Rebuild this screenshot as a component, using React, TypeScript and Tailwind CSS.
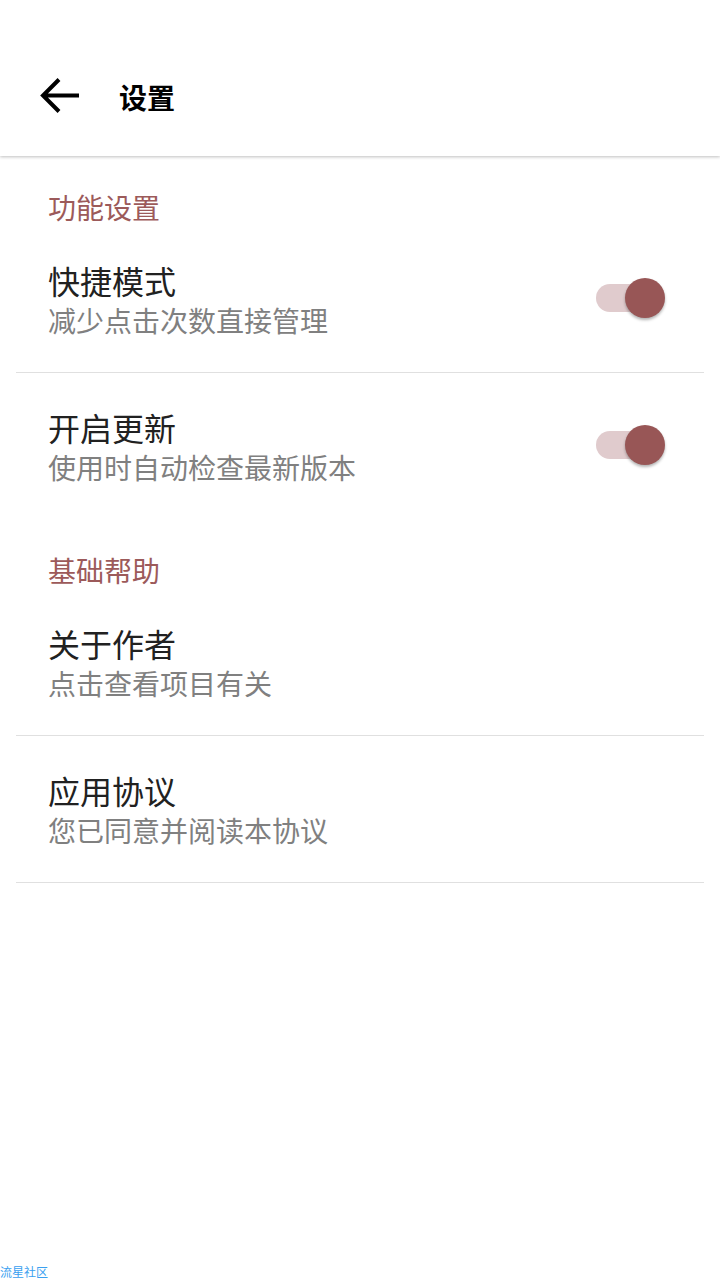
import React, { useState } from "react";

const FONT = '"Noto Sans CJK SC", "Noto Sans", sans-serif';

function Toggle({ on, onChange }: { on: boolean; onChange: () => void }) {
  return (
    <button
      onClick={onChange}
      className="relative h-[40px] w-[70px] shrink-0"
      aria-pressed={on}
    >
      <span
        className={`absolute left-[1px] top-[6px] h-[28px] w-[68px] rounded-full ${
          on ? "bg-[#e0cbcd]" : "bg-[#bdbdbd]"
        }`}
      />
      <span
        className={`absolute top-0 h-[40px] w-[40px] rounded-full shadow-[0_2px_3px_rgba(0,0,0,0.3)] ${
          on ? "left-[30px] bg-[#985656]" : "left-0 bg-[#f5f5f5]"
        }`}
      />
    </button>
  );
}

function SectionTitle({ children }: { children: React.ReactNode }) {
  return (
    <div className="h-[70px] px-[48px] pt-[37px] text-[28px] leading-[28px] text-[#9c5a5a]">
      {children}
    </div>
  );
}

function Item({
  title,
  sub,
  divider,
  right,
}: {
  title: string;
  sub: string;
  divider: boolean;
  right?: React.ReactNode;
}) {
  return (
    <div>
      <div className="flex h-[146px] items-start px-[48px] pt-[35px]">
        <div className="flex-1">
          <div className="text-[32px] leading-[38px] text-[#212121]">{title}</div>
          <div className="mt-[4px] text-[28px] leading-[34px] text-[#808080]">{sub}</div>
        </div>
        {right && <div className="mr-[7px] mt-[17px]">{right}</div>}
      </div>
      {divider && <div className="mx-[16px] h-px bg-[#e0e0e0]" />}
    </div>
  );
}

export default function App() {
  const [quick, setQuick] = useState(true);
  const [update, setUpdate] = useState(true);

  return (
    <div className="relative h-[1280px] w-[720px] overflow-hidden bg-white" style={{ fontFamily: FONT }}>
      <header className="relative z-10 flex h-[156px] items-center bg-white pt-[38px] shadow-[0_1px_3px_rgba(0,0,0,0.25)]">
        <button className="ml-[39px] flex h-[42px] w-[42px] items-center justify-center">
          <svg width="42" height="42" viewBox="0 0 42 42" fill="none">
            <path
              d="M40 19.5H5 M20 3.5 L4 19.5 L20 35.5"
              stroke="#000"
              strokeWidth="4"
              strokeLinecap="butt"
              strokeLinejoin="miter"
            />
          </svg>
        </button>
        <h1 className="ml-[38px] text-[28px] font-bold leading-[40px] text-black">设置</h1>
      </header>

      <SectionTitle>功能设置</SectionTitle>
      <Item
        title="快捷模式"
        sub="减少点击次数直接管理"
        divider
        right={<Toggle on={quick} onChange={() => setQuick(!quick)} />}
      />
      <Item
        title="开启更新"
        sub="使用时自动检查最新版本"
        divider={false}
        right={<Toggle on={update} onChange={() => setUpdate(!update)} />}
      />

      <SectionTitle>基础帮助</SectionTitle>
      <Item title="关于作者" sub="点击查看项目有关" divider />
      <Item title="应用协议" sub="您已同意并阅读本协议" divider />

      <div className="absolute bottom-0 left-0 text-[12px] leading-[16px] text-[#3aa0f0]">流星社区</div>
    </div>
  );
}
